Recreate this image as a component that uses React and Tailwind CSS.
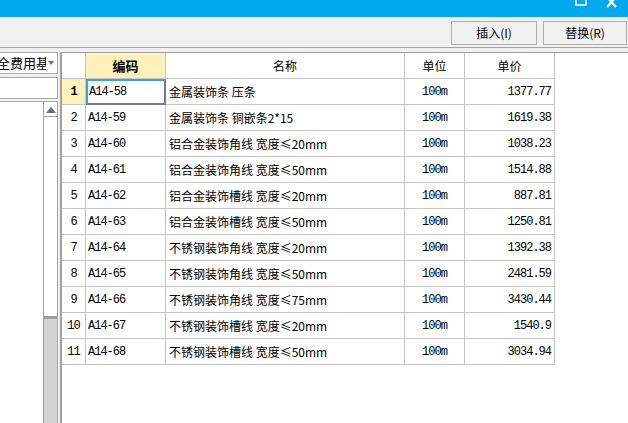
import React from 'react';

const rows = [
  ['A14-58', '金属装饰条 压条', '100m', '1377.77'],
  ['A14-59', '金属装饰条 铜嵌条2*15', '100m', '1619.38'],
  ['A14-60', '铝合金装饰角线 宽度≤20mm', '100m', '1038.23'],
  ['A14-61', '铝合金装饰角线 宽度≤50mm', '100m', '1514.88'],
  ['A14-62', '铝合金装饰槽线 宽度≤20mm', '100m', '887.81'],
  ['A14-63', '铝合金装饰槽线 宽度≤50mm', '100m', '1250.81'],
  ['A14-64', '不锈钢装饰角线 宽度≤20mm', '100m', '1392.38'],
  ['A14-65', '不锈钢装饰角线 宽度≤50mm', '100m', '2481.59'],
  ['A14-66', '不锈钢装饰角线 宽度≤75mm', '100m', '3430.44'],
  ['A14-67', '不锈钢装饰槽线 宽度≤20mm', '100m', '1540.9'],
  ['A14-68', '不锈钢装饰槽线 宽度≤50mm', '100m', '3034.94'],
];

const cjk = "font-['Noto_Sans_CJK_SC',sans-serif]";
const mono = "font-['Liberation_Mono','Noto_Sans_CJK_SC',monospace] tracking-[-1px]";
const cell = 'h-[26px] border-r border-b border-[#c4c4c4] flex items-center overflow-hidden whitespace-nowrap';

export default function App() {
  return (
    <div className={`w-[628px] h-[423px] overflow-hidden bg-[#f0f0f0] flex flex-col text-[12px] text-black ${cjk}`}>
      {/* title bar */}
      <div className="h-[17px] bg-[#00a8ec] flex justify-end items-start shrink-0">
        <svg width="12" height="7" viewBox="0 0 12 7" className="mr-[19px]">
          <rect x="1" y="-1" width="10" height="6" fill="none" stroke="#fff" strokeWidth="1.5" />
        </svg>
        <svg width="12" height="8" viewBox="0 0 12 8" className="mr-[10px]">
          <path d="M1 -3 L10 7 M10 -3 L1 7" stroke="#fff" strokeWidth="2.2" />
        </svg>
      </div>

      {/* toolbar */}
      <div className="h-[31px] shrink-0 flex justify-end items-start pt-[4px] pr-[1px] gap-[6px] border-b border-[#7cc85a]">
        <button className="w-[86px] h-[24px] border border-[#adadad] bg-[#f0f0f0] text-[12px] leading-none">插入(I)</button>
        <button className="w-[84px] h-[24px] border border-[#adadad] bg-[#f0f0f0] text-[12px] leading-none">替换(R)</button>
      </div>

      <div className="flex flex-1 pt-[4px] min-h-0">
        {/* left panel */}
        <div className="w-[58px] shrink-0 flex flex-col">
          <div className="h-[22px] bg-white border border-[#a8a8a8] border-l-0 flex items-center relative overflow-hidden">
            <span className="ml-[-3px] w-[49px] overflow-hidden whitespace-nowrap text-[13px]">全费用基础</span>
            <span className="absolute right-[3px] top-[8px] w-0 h-0 border-l-[3px] border-r-[3px] border-t-[4px] border-l-transparent border-r-transparent border-t-[#707070]" />
          </div>
          <div className="h-[22px] mt-[3px] bg-white border border-[#a8a8a8] border-l-0" />
          <div className="flex-1 mt-[2px] bg-white border-t border-r border-[#a8a8a8] flex justify-end">
            <div className="w-[14px] flex flex-col border-l border-[#a0a0a0]">
              <div className="h-[13px] mt-[2px] bg-white border-b border-[#a0a0a0] flex items-center justify-center">
                <span className="w-0 h-0 border-l-[5px] border-r-[5px] border-b-[6px] border-l-transparent border-r-transparent border-b-[#6e6e78]" />
              </div>
              <div className="h-[202px] bg-white border-b-[3px] border-[#a0a0a0]" />
              <div className="flex-1 bg-[#d4d4d4]" />
            </div>
          </div>
        </div>

        {/* splitter */}
        <div className="w-[3px] shrink-0 border-r border-[#a0a0a0]" />

        {/* grid */}
        <div className="flex-1 bg-white border-t border-l border-[#a0a0a0]">
          <div className="grid grid-cols-[24px_80px_239px_60px_90px] w-max">
            <div className={`${cell} h-[25px]`} />
            <div className={`${cell} h-[25px] justify-center bg-[#fff0bc] font-bold text-[13px]`}>编码</div>
            <div className={`${cell} h-[25px] justify-center`}>名称</div>
            <div className={`${cell} h-[25px] justify-center`}>单位</div>
            <div className={`${cell} h-[25px] justify-center`}>单价</div>

            {rows.map((r, i) => (
              <React.Fragment key={r[0]}>
                <div className={`${cell} justify-center ${mono} ${i === 0 ? 'bg-[#fff0bc] font-bold' : ''}`}>{i + 1}</div>
                {i === 0 ? (
                  <div className="h-[26px] border-t-2 border-l-2 border-t-[#3ba3d6] border-l-[#3ba3d6] border-r-2 border-b-2 border-r-[#7a7a7a] border-b-[#7a7a7a] flex items-center pl-[1px] whitespace-nowrap">
                    <span className={mono}>{r[0]}</span>
                  </div>
                ) : (
                  <div className={`${cell} pl-[2px]`}><span className={mono}>{r[0]}</span></div>
                )}
                <div className={`${cell} pl-[3px]`}>{r[1]}</div>
                <div className={`${cell} justify-center`}><span className={mono}>{r[2]}</span></div>
                <div className={`${cell} justify-end pr-[3px]`}><span className={mono}>{r[3]}</span></div>
              </React.Fragment>
            ))}
          </div>
        </div>
      </div>
    </div>
  );
}
